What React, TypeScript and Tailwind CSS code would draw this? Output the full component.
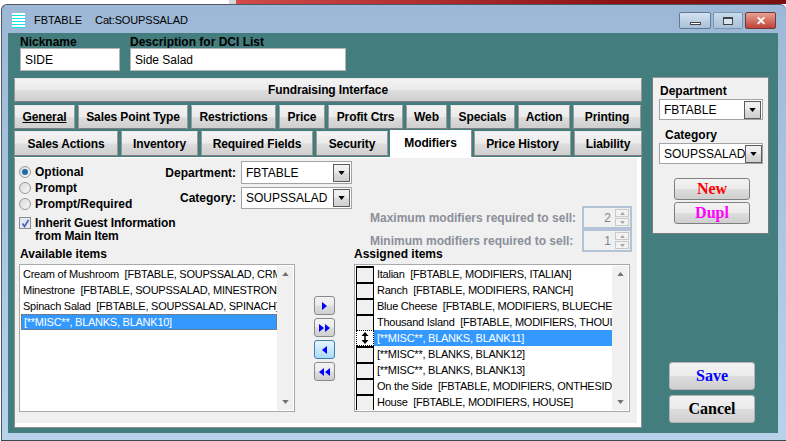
import { ReactNode } from "react";

const btnFace = "bg-[linear-gradient(#f3f3f3_0%,#ebebeb_48%,#dddddd_52%,#cfcfcf_100%)]";

function Tab({ label, className, underline }: { label: string; className: string; underline?: boolean }) {
  return (
    <div
      className={`flex items-center justify-center border border-[#999999] border-t-[#e8e8e8] border-b-[#808080] text-[12px] font-bold tracking-[-0.1px] text-black ${btnFace} ${className}`}
    >
      <span className={underline ? "underline" : ""}>{label}</span>
    </div>
  );
}

function Triangle({ dir, className }: { dir: "up" | "down" | "left" | "right"; className: string }) {
  const points = {
    up: "0,5 4,0 8,5",
    down: "0,0 8,0 4,5",
    right: "0,0 5,4 0,8",
    left: "5,0 0,4 5,8",
  }[dir];
  const size = dir === "up" || dir === "down" ? "0 0 8 5" : "0 0 5 8";
  return (
    <svg viewBox={size} className={className}>
      <polygon points={points} fill="currentColor" />
    </svg>
  );
}

function Select({ value, className }: { value: string; className: string }) {
  return (
    <div className={`flex items-center justify-between border border-[#a3a3a3] bg-white pl-[4px] pr-[1px] text-[12px] text-black ${className}`}>
      <span className="whitespace-nowrap">{value}</span>
      <div className={`flex h-[18px] w-[17px] shrink-0 items-center justify-center border border-[#5c5c5c] ${btnFace}`}>
        <Triangle dir="down" className="h-[4px] w-[7px] text-black" />
      </div>
    </div>
  );
}

function Radio({ label, checked }: { label: string; checked?: boolean }) {
  return (
    <div className="flex h-[16px] items-center gap-[4px] text-[12px] font-bold text-black">
      <div className="flex h-[12px] w-[12px] items-center justify-center rounded-full border border-[#9a9a9a] bg-[linear-gradient(135deg,#d8d8d8,#f8f8f8)]">
        {checked && <div className="h-[6px] w-[6px] rounded-full bg-[#1f6aa5]" />}
      </div>
      <span>{label}</span>
    </div>
  );
}

function Spinner({ value }: { value: string }) {
  return (
    <div className="flex h-[23px] w-[50px] items-center justify-end border-2 border-[#b4c2d6] bg-[#f0f0f0] pr-[1px] text-[12px] font-normal text-[#7d838c]">
      <span className="mr-[4px]">{value}</span>
      <div className="flex flex-col gap-[1px]">
        <div className="flex h-[8px] w-[14px] items-center justify-center border border-[#c9c9c9] bg-[#f2f2f2]">
          <Triangle dir="up" className="h-[3px] w-[5px] text-[#a5a5a5]" />
        </div>
        <div className="flex h-[8px] w-[14px] items-center justify-center border border-[#c9c9c9] bg-[#f2f2f2]">
          <Triangle dir="down" className="h-[3px] w-[5px] text-[#a5a5a5]" />
        </div>
      </div>
    </div>
  );
}

function ScrollTrack() {
  return (
    <div className="flex w-[16px] shrink-0 flex-col items-center justify-between bg-[#f0f0f0] py-[6px]">
      <Triangle dir="up" className="h-[4px] w-[7px] text-[#707070]" />
      <Triangle dir="down" className="h-[4px] w-[7px] text-[#707070]" />
    </div>
  );
}

function ArrowButton({ children, active }: { children: ReactNode; active?: boolean }) {
  return (
    <div
      className={`flex h-[19px] w-[21px] items-center justify-center gap-[1px] rounded-[3px] border text-[#0000ff] ${
        active
          ? "border-[#3c7fb1] bg-[linear-gradient(#e8f5fd,#a9dbf6)]"
          : `border-[#8a8a8a] ${btnFace}`
      }`}
    >
      {children}
    </div>
  );
}

function BigButton({ label, className }: { label: string; className: string }) {
  return (
    <div
      className={`flex items-center justify-center rounded-[3px] border font-['Liberation_Serif',serif] text-[16px] font-bold ${btnFace} ${className}`}
    >
      {label}
    </div>
  );
}

const available = [
  "Cream of Mushroom  [FBTABLE, SOUPSSALAD, CRMUSHROOM]",
  "Minestrone  [FBTABLE, SOUPSSALAD, MINESTRONE]",
  "Spinach Salad  [FBTABLE, SOUPSSALAD, SPINACH]",
  "[**MISC**, BLANKS, BLANK10]",
];

const assigned = [
  "Italian  [FBTABLE, MODIFIERS, ITALIAN]",
  "Ranch  [FBTABLE, MODIFIERS, RANCH]",
  "Blue Cheese  [FBTABLE, MODIFIERS, BLUECHEESE]",
  "Thousand Island  [FBTABLE, MODIFIERS, THOUISLAND]",
  "[**MISC**, BLANKS, BLANK11]",
  "[**MISC**, BLANKS, BLANK12]",
  "[**MISC**, BLANKS, BLANK13]",
  "On the Side  [FBTABLE, MODIFIERS, ONTHESIDE]",
  "House  [FBTABLE, MODIFIERS, HOUSE]",
];

export default function App() {
  return (
    <div className="flex h-[441px] w-[786px] flex-col overflow-hidden bg-white font-['Liberation_Sans',sans-serif]">
      {/* Desktop behind the window */}
      <div className="flex h-[4px] shrink-0">
        <div className="w-[229px] bg-white" />
        <div className="w-[7px] bg-[#d8d8d8]" />
        <div className="flex-1 bg-[linear-gradient(90deg,#d24a4a,#8c1212_70%,#7a0e0e)]" />
      </div>

      {/* Window */}
      <div className="ml-[1px] flex h-[437px] w-[785px] flex-col rounded-t-[6px] border-t border-l border-b border-[#4a5a68] border-b-[#2f4a55] bg-[linear-gradient(#9db8d6,#b9d2ec)]">
        {/* Title bar */}
        <div className="flex h-[28px] shrink-0 items-center pl-[10px] pr-[10px] pt-[3px]">
          <svg viewBox="0 0 13 15" className="h-[15px] w-[13px]">
            <rect width="13" height="15" fill="#ffffff" />
            <path d="M0 2.5H13M0 5.5H13M0 8.5H13M0 11.5H13M0 14.5H13" stroke="#19e3e8" strokeWidth="1" />
          </svg>
          <span className="ml-[9px] text-[11px] text-black">FBTABLE</span>
          <span className="ml-[13px] text-[11px] tracking-[-0.15px] text-black">Cat:SOUPSSALAD</span>
          <div className="ml-auto flex gap-[2px]">
            <div className="flex h-[17px] w-[32px] items-end justify-center rounded-[2px] border border-[#5f7a94] bg-[linear-gradient(#d4e2f0,#a9c0d8)] pb-[3px]">
              <div className="h-[3px] w-[11px] border border-[#444444] bg-white" />
            </div>
            <div className="flex h-[17px] w-[30px] items-center justify-center rounded-[2px] border border-[#7d97b0] bg-[linear-gradient(#c9dbec,#a9c0d8)]">
              <div className="h-[8px] w-[10px] border border-[#444444] border-t-2 bg-[#d9e6f2]" />
            </div>
            <div className="flex h-[17px] w-[31px] items-center justify-center rounded-[2px] border border-[#6e3a3a] bg-[linear-gradient(#e8a090,#c0423a)] text-[12px] font-bold leading-none text-white">
              ✕
            </div>
          </div>
        </div>

        {/* Client area */}
        <div className="ml-[6px] flex h-[400px] w-[770px] shrink-0 bg-[#437d7d]">
          <div className="ml-[6px] flex w-[628px] flex-col">
            {/* Nickname and description */}
            <div className="flex h-[45px] shrink-0 gap-[10px] pl-[6px] pt-[2px] text-[12px] font-bold text-black">
              <div className="flex flex-col">
                <span className="h-[13px] leading-[14px]">Nickname</span>
                <div className="h-[23px] w-[100px] border border-[#b5b5b5] bg-white pl-[4px] text-[12px] font-normal leading-[22px]">SIDE</div>
              </div>
              <div className="flex flex-col">
                <span className="h-[13px] leading-[14px]">Description for DCI List</span>
                <div className="h-[23px] w-[216px] border border-[#b5b5b5] bg-white pl-[4px] text-[12px] font-normal leading-[22px]">Side Salad</div>
              </div>
            </div>

            <Tab label="Fundraising Interface" className="h-[24px] w-[628px] shrink-0" />

            {/* Tab rows */}
            <div className="mt-[3px] flex h-[24px] shrink-0 gap-[3px]">
              <Tab label="General" underline className="w-[61px]" />
              <Tab label="Sales Point Type" className="w-[110px]" />
              <Tab label="Restrictions" className="w-[85px]" />
              <Tab label="Price" className="w-[46px]" />
              <Tab label="Profit Ctrs" className="w-[75px]" />
              <Tab label="Web" className="w-[41px]" />
              <Tab label="Specials" className="w-[65px]" />
              <Tab label="Action" className="w-[52px]" />
              <Tab label="Printing" className="w-[68px]" />
            </div>
            <div className="mt-[2px] flex h-[25px] shrink-0 gap-[3px]">
              <Tab label="Sales Actions" className="w-[104px]" />
              <Tab label="Inventory" className="w-[77px]" />
              <Tab label="Required Fields" className="w-[112px]" />
              <Tab label="Security" className="w-[72px]" />
              <div className="z-10 -mx-[1px] -mt-[1px] flex h-[27px] w-[82px] items-start justify-center border-r border-[#8f8f8f] bg-[#ffffff] pt-[4px] text-[12px] font-bold tracking-[-0.1px] text-black">
                Modifiers
              </div>
              <Tab label="Price History" className="w-[97px]" />
              <Tab label="Liability" className="w-[68px]" />
            </div>

            {/* Modifiers panel */}
            <div className="mt-[1px] h-[271px] w-[628px] shrink-0 border border-[#8f8f8f] border-t-white">
              <div className="h-[269px] border-r-[4px] border-b-[4px] border-white bg-[#f0f0f0]">
                <div className="flex h-[90px]">
                  <div className="ml-[4px] w-[146px] pt-[6px]">
                    <Radio label="Optional" checked />
                    <Radio label="Prompt" />
                    <Radio label="Prompt/Required" />
                    <div className="mt-[5px] flex items-start gap-[4px] whitespace-nowrap text-[12px] font-bold leading-[13px] tracking-[-0.12px] text-black">
                      <div className="flex h-[12px] w-[12px] shrink-0 items-center justify-center border border-[#8e8f8f] bg-[#e4e8f4]">
                        <svg viewBox="0 0 9 9" className="h-[9px] w-[9px]">
                          <path d="M1.5 4.5 3.5 7.5 7.5 1" fill="none" stroke="#4a5fb0" strokeWidth="1.6" />
                        </svg>
                      </div>
                      <span>
                        Inherit Guest Information
                        <br />
                        from Main Item
                      </span>
                    </div>
                  </div>
                  <div className="flex w-[187px] flex-col items-end gap-[3px] pt-[3px]">
                    <div className="flex items-center gap-[5px] text-[12px] font-bold text-black">
                      <span>Department:</span>
                      <Select value="FBTABLE" className="h-[23px] w-[111px] font-normal" />
                    </div>
                    <div className="flex items-center gap-[5px] text-[12px] font-bold text-black">
                      <span>Category:</span>
                      <Select value="SOUPSSALAD" className="h-[22px] w-[111px] font-normal" />
                    </div>
                  </div>
                  <div className="ml-[18px] flex w-[262px] flex-col pt-[48px]">
                    <div className="flex h-[23px] items-center justify-between text-[12px] font-bold text-[#8a8f99]">
                      <span>Maximum modifiers required to sell:</span>
                      <Spinner value="2" />
                    </div>
                    <div className="flex h-[23px] items-center justify-between text-[12px] font-bold text-[#8a8f99]">
                      <span>Minimum modifiers required to sell:</span>
                      <Spinner value="1" />
                    </div>
                  </div>
                </div>

                {/* Lists */}
                <div className="flex">
                  <div className="ml-[4px] flex w-[276px] flex-col">
                    <span className="h-[16px] pl-[1px] text-[12px] font-bold leading-[13px] text-black">Available items</span>
                    <div className="flex h-[148px] border border-[#a8a8a8] bg-white p-[1px]">
                      <div className="min-w-0 flex-1">
                        {available.map((item, i) => (
                          <div
                            key={item}
                            className={`h-[16px] overflow-hidden whitespace-pre px-[2px] text-[11px] tracking-[-0.25px] ${
                              i === 3 ? "border border-dotted border-[#a0622a] bg-[#3399ff] leading-[14px] text-white" : "leading-[16px] text-black"
                            }`}
                          >
                            {item}
                          </div>
                        ))}
                      </div>
                      <ScrollTrack />
                    </div>
                  </div>

                  <div className="ml-[19px] flex w-[21px] flex-col gap-[3px] pt-[48px]">
                    <ArrowButton>
                      <Triangle dir="right" className="h-[8px] w-[5px]" />
                    </ArrowButton>
                    <ArrowButton>
                      <Triangle dir="right" className="h-[8px] w-[5px]" />
                      <Triangle dir="right" className="h-[8px] w-[5px]" />
                    </ArrowButton>
                    <ArrowButton active>
                      <Triangle dir="left" className="h-[8px] w-[5px]" />
                    </ArrowButton>
                    <ArrowButton>
                      <Triangle dir="left" className="h-[8px] w-[5px]" />
                      <Triangle dir="left" className="h-[8px] w-[5px]" />
                    </ArrowButton>
                  </div>

                  <div className="ml-[19px] flex w-[276px] flex-col">
                    <span className="h-[16px] text-[12px] font-bold leading-[13px] text-black">Assigned items</span>
                    <div className="flex h-[148px] border border-[#a8a8a8] bg-white p-[1px]">
                      <div className="min-w-0 flex-1">
                        {assigned.map((item, i) => (
                          <div key={item} className="flex h-[16px]">
                            {i === 4 ? (
                              <div className="flex h-[16px] w-[18px] shrink-0 items-center justify-center border border-dotted border-black bg-white text-black">
                                <svg viewBox="0 0 8 12" className="h-[12px] w-[8px]">
                                  <path d="M4 0 7.5 4H.5ZM4 12 .5 8h7ZM3.2 3h1.6v6H3.2Z" fill="currentColor" />
                                </svg>
                              </div>
                            ) : (
                              <div className="h-[16px] w-[18px] shrink-0 border-x border-t-2 border-black bg-[#f0f0f0]" />
                            )}
                            <div
                              className={`min-w-0 flex-1 overflow-hidden whitespace-pre pl-[3px] text-[11px] leading-[16px] tracking-[-0.25px] ${
                                i === 4 ? "bg-[#3399ff] text-white" : "text-black"
                              }`}
                            >
                              {item}
                            </div>
                          </div>
                        ))}
                      </div>
                      <ScrollTrack />
                    </div>
                  </div>
                </div>
              </div>
            </div>
          </div>

          {/* Right column */}
          <div className="ml-[10px] mt-[44px] flex w-[117px] flex-col">
            <div className="flex h-[157px] flex-col border border-[#7a7a7a] border-t-[#9a9a9a] bg-[#f0f0f0] pl-[6px]">
              <span className="mt-[7px] h-[13px] pl-[1px] text-[12px] font-bold leading-[13px] text-black">Department</span>
              <Select value="FBTABLE" className="mt-[1px] h-[21px] w-[104px] pl-[3px]" />
              <span className="mt-[9px] h-[13px] pl-[6px] text-[12px] font-bold leading-[13px] text-black">Category</span>
              <Select value="SOUPSSALAD" className="mt-[1px] h-[21px] w-[104px] pl-[3px]" />
              <BigButton label="New" className="ml-[15px] mt-[14px] h-[22px] w-[76px] border-[#7f7f7f] text-[#ff0000]" />
              <BigButton label="Dupl" className="ml-[15px] mt-[2px] h-[22px] w-[76px] border-[#7f7f7f] text-[#ff00ff]" />
            </div>
            <BigButton label="Save" className="ml-[17px] mt-[128px] h-[28px] w-[86px] border-[#b5b5b5] text-[#0000ff]" />
            <BigButton label="Cancel" className="ml-[17px] mt-[5px] h-[28px] w-[86px] border-[#b5b5b5] text-black" />
          </div>
        </div>
      </div>
    </div>
  );
}
